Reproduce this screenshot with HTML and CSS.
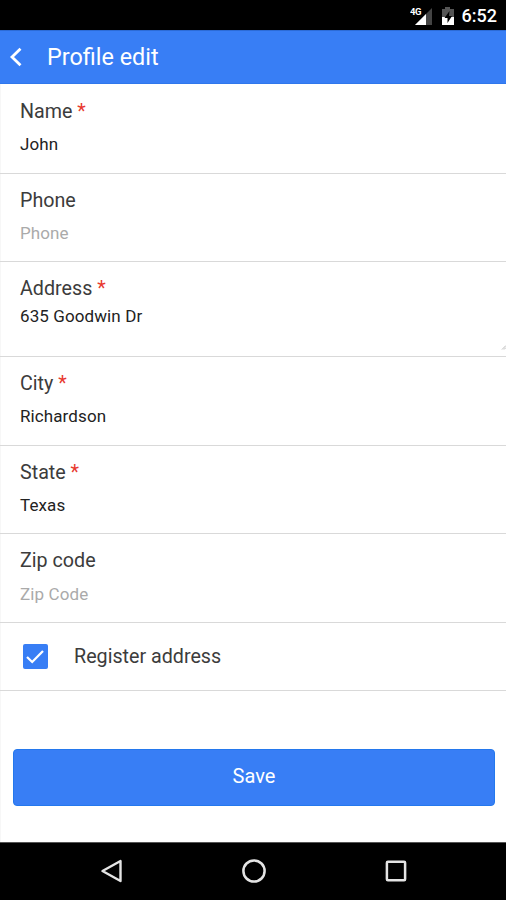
FILE: index.html
```
<!DOCTYPE html>
<html lang="en">
<head>
<meta charset="utf-8">
<title>Profile edit</title>
<link rel="stylesheet" href="styles.css">
</head>
<body>
<div class="statusbar">
  <svg class="signal" width="24" height="22" viewBox="0 0 24 22">
    <path d="M22 3v17H5z" fill="#444"/>
    <path d="M16 9v11H5z" fill="#fff"/>
    <text class="network" x="0" y="10">4G</text>
  </svg>
  <svg class="battery" width="14" height="20" viewBox="0 0 14 20">
    <path d="M4 1h5v2h4v16H1V3h3z" fill="#555"/>
    <path d="M1 11h12v8H1z" fill="#fff"/>
    <path d="M8.500 5 3.500 12h3v5l4.500-7H8z" fill="#000"/>
  </svg>
  <span class="clock">6:52</span>
</div>
<header class="header">
  <svg class="back" width="14" height="20" viewBox="0 0 14 20"><path d="M11.500 1.800 3 10l8.500 8.200" fill="none" stroke="#fff" stroke-width="2.800"/></svg>
  <h1 class="title">Profile edit</h1>
</header>
<main class="form">
  <div class="field field-first"><div class="label">Name <span class="req">*</span></div><div class="value">John</div></div>
  <div class="field"><div class="label">Phone</div><div class="value placeholder">Phone</div></div>
  <div class="field field-area"><div class="label">Address <span class="req">*</span></div><div class="value">635 Goodwin Dr</div>
    <svg class="grip" width="5" height="6" viewBox="0 0 5 6"><path d="M1 5.500 5 1.500M3 5.500l2-2" stroke="#bbb" fill="none"/></svg></div>
  <div class="field field-city"><div class="label">City <span class="req">*</span></div><div class="value">Richardson</div></div>
  <div class="field"><div class="label">State <span class="req">*</span></div><div class="value">Texas</div></div>
  <div class="field field-zip"><div class="label">Zip code</div><div class="value placeholder">Zip Code</div></div>
  <div class="check-row">
    <span class="checkbox"><svg width="25" height="25" viewBox="0 0 25 25"><path d="m4 13 5.200 5L20 7" fill="none" stroke="#fff" stroke-width="2.300"/></svg></span>
    <span class="label">Register address</span>
  </div>
  <div class="actions"><div class="save">Save</div></div>
</main>
<nav class="navbar">
  <svg width="24" height="26" viewBox="0 0 24 26"><path d="M21.500 3v20L3.500 13z" fill="none" stroke="#e4e4e4" stroke-width="2.400" stroke-linejoin="round"/></svg>
  <svg width="26" height="26" viewBox="0 0 26 26"><circle cx="13" cy="13" r="10.600" fill="none" stroke="#e4e4e4" stroke-width="2.500"/></svg>
  <svg width="24" height="26" viewBox="0 0 24 26"><rect x="2.900" y="3.700" width="18.200" height="18.600" rx="1" fill="none" stroke="#e4e4e4" stroke-width="2.500"/></svg>
</nav>
</body>
</html>
```
FILE: styles.css
```
* { box-sizing: border-box; }
body {
  margin: 0;
  width: 506px;
  height: 900px;
  display: flex;
  flex-direction: column;
  overflow: hidden;
  background: #fff;
  color: #3c3c3c;
  font-family: Roboto, "Liberation Sans", sans-serif;
}
svg { display: block; flex: none; }
.statusbar {
  height: 30px;
  padding: 1px 9px 0 0;
  display: flex;
  justify-content: flex-end;
  align-items: center;
  background: #000;
  color: #fff;
}
.signal { margin-right: 7px; }
.network { font: 700 9.5px Roboto, sans-serif; fill: #fff; letter-spacing: -0.5px; }
.battery { margin-right: 7px; }
.clock { font-size: 18px; font-weight: 500; line-height: 28px; }
.header {
  height: 54px;
  padding: 0 9px;
  display: flex;
  align-items: center;
  background: #387ef5;
  border-top: 1px solid #2c6bd6;
  border-bottom: 1px solid #2f77ec;
  color: #fff;
}
.back { margin-right: 24px; }
.title { margin: 0; font-size: 23.4px; font-weight: 400; line-height: 50px; }
.form { height: 758px; box-shadow: inset 1px 0 #f7f7f7; }
.field {
  position: relative;
  height: 88px;
  padding: 14px 20px 0;
  border-bottom: 1px solid #d9d9d9;
}
.field-first { height: 90px; padding-top: 15px; }
.field-area { height: 95px; }
.field-city, .field-zip { height: 89px; }
.label { font-size: 19.7px; line-height: 26px; white-space: nowrap; }
.req { color: #e8392f; }
.value { margin-top: 7px; font-size: 17px; line-height: 24px; letter-spacing: 0.1px; color: #222; }
.field-area .value { margin-top: 2px; }
.field-zip .value { margin-top: 8px; }
.field .placeholder { color: #aaa; }
.grip { position: absolute; right: 0; bottom: 6px; }
.check-row {
  height: 68px;
  padding-left: 23px;
  display: flex;
  align-items: center;
  border-bottom: 1px solid #d9d9d9;
}
.checkbox { width: 25px; height: 25px; margin-right: 26px; border-radius: 2px; background: #387ef5; }
.actions { padding: 58px 11px 0 13px; }
.save {
  height: 57px;
  border: 1px solid #2478ed;
  border-radius: 4px;
  background: #387ef5;
  color: #fff;
  font-size: 20px;
  line-height: 53px;
  text-align: center;
}
.navbar {
  height: 58px;
  padding: 0 98px 2px 99px;
  display: flex;
  justify-content: space-between;
  align-items: center;
  background: #000;
  border-top: 1px solid #555;
}
```
